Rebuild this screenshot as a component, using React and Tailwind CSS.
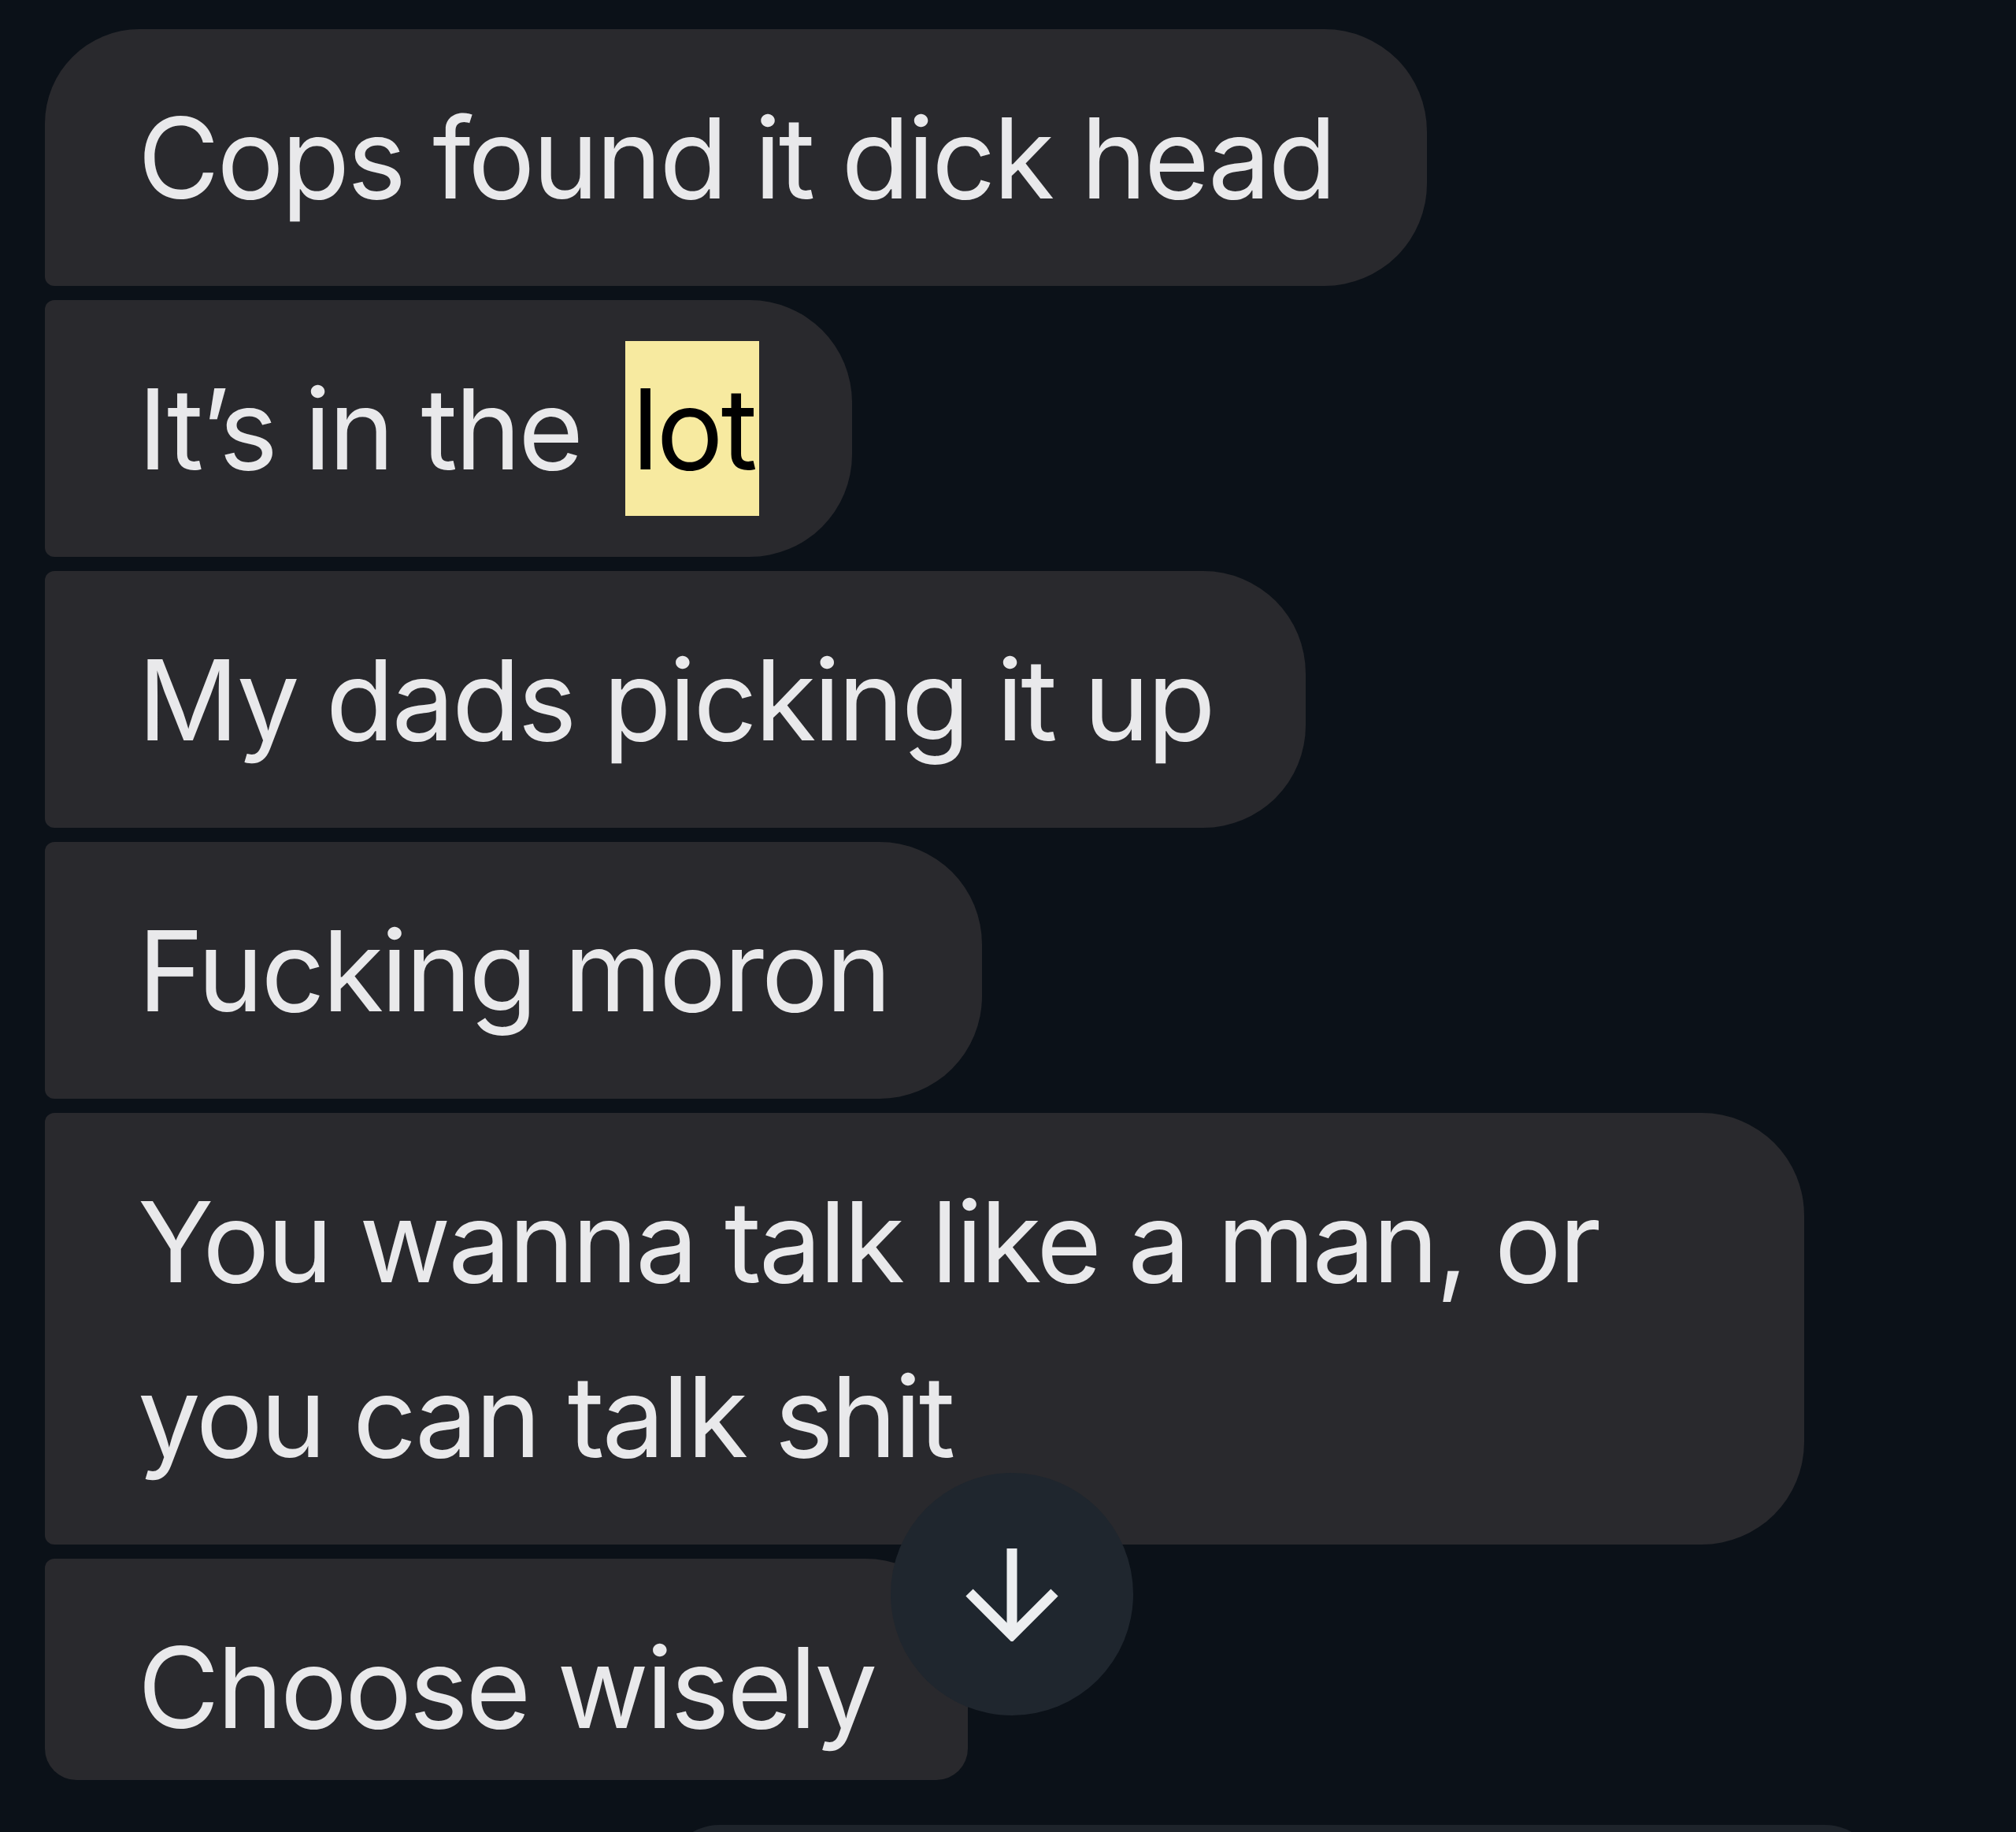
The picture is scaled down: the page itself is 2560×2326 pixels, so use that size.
import React from 'react';

const messages = [
  { id: 1, text: 'Cops found it dick head', corners: 'rounded-tl-[120px] rounded-bl-[12px] rounded-r-[130px]' },
  { id: 2, text: 'It’s in the ', highlight: 'lot', corners: 'rounded-l-[12px] rounded-r-[130px]' },
  { id: 3, text: 'My dads picking it up', corners: 'rounded-l-[12px] rounded-r-[130px]' },
  { id: 4, text: 'Fucking moron', corners: 'rounded-l-[12px] rounded-r-[130px]' },
  { id: 5, lines: ['You wanna talk like a man, or', 'you can talk shit'], corners: 'w-[2234px] rounded-l-[12px] rounded-r-[130px]' },
];

const Bubble = ({ msg }) => (
  <div className={`bg-[#29292d] px-[118px] py-[52px] text-[#e9e9eb] ${msg.corners}`}>
    {msg.lines ? (
      msg.lines.map((line, i) => <div key={i} className="whitespace-nowrap">{line}</div>)
    ) : (
      <div className="whitespace-nowrap">
        {msg.text}
        {msg.highlight && (
          <span className="inline-block ml-[20px] bg-[#f7eaa0] text-black pl-[8px] pr-[5px]">{msg.highlight}</span>
        )}
      </div>
    )}
  </div>
);

const App = () => {
  return (
    <div className="relative w-[2560px] h-[2326px] overflow-hidden bg-[#0b1118] font-['Inter',sans-serif] text-[142px] leading-[222px] tracking-[-3.3px]">
      <div className="flex flex-col items-start gap-[18px] pl-[57px] pt-[37px]">
        {messages.map(msg => <Bubble key={msg.id} msg={msg} />)}

        {/* last bubble is cut off by the compose area */}
        <div className="h-[281px] overflow-hidden bg-[#29292d] px-[118px] py-[52px] text-[#e9e9eb] rounded-tl-[12px] rounded-tr-[130px] rounded-b-[40px]">
          <div className="whitespace-nowrap">Choose wisely</div>
        </div>
      </div>

      {/* compose field peeking at the bottom */}
      <div className="ml-[844px] mt-[57px] w-[1543px] h-[120px] rounded-t-[70px] bg-[#1e242b]"></div>

      {/* scroll to bottom button */}
      <div className="absolute left-[1131px] top-[1870px] w-[308px] h-[308px] rounded-full bg-[#1f262e] flex items-center justify-center">
        <svg width="120" height="120" viewBox="0 0 120 120" fill="none" stroke="#eceef0" strokeWidth="13">
          <line x1="60" y1="2" x2="60" y2="112" />
          <polyline points="6,58 60,112 114,58" />
        </svg>
      </div>
    </div>
  );
};

export default App;
